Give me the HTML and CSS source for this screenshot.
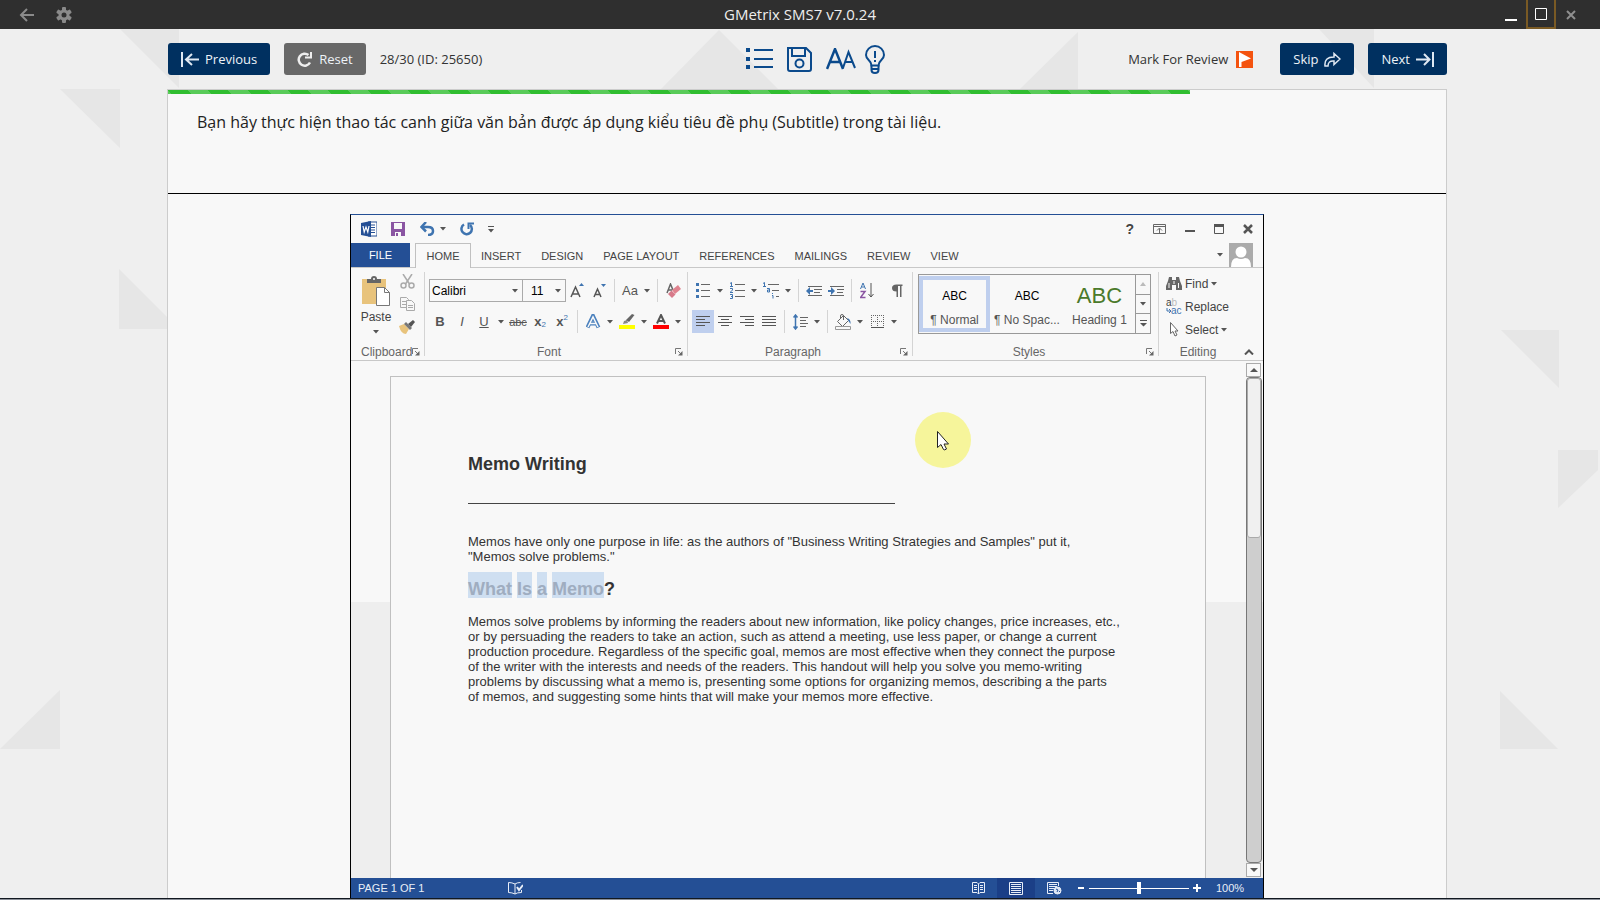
FILE: index.html
```html
<!DOCTYPE html>
<html lang="vi">
<head>
<meta charset="utf-8">
<title>GMetrix SMS7 v7.0.24</title>
<link rel="stylesheet" href="styles.css">
</head>
<body>
<svg width="0" height="0" class="sprite" aria-hidden="true">
  <symbol id="caret" viewBox="0 0 6 4"><path d="M0 0h6L3 3.500z" fill="#555"/></symbol>
  <symbol id="launch" viewBox="0 0 8 8"><path d="M.5 6V.5H6M3 3l3 3" fill="none" stroke="#777"/><path d="M7.500 3v4.500H3z" fill="#666"/></symbol>
</svg>

<svg class="backdrop" viewBox="0 0 1600 900" preserveAspectRatio="xMidYMin slice" aria-hidden="true">
  <g fill="#e6e6e6">
    <path d="M120 29h59v59z"/><path d="M60 89h60v59z"/><path d="M119 269l49 49v11h-49z"/><path d="M0 749l60-59v59z"/>
    <path d="M661 89l58-59 59 59z"/><path d="M1020 89l58-57v57z"/><path d="M1319 29h55v59z"/>
    <path d="M1501 330h58v58z"/><path d="M1558 450h40v20l-40 38z"/><path d="M1500 691l58 58h-58z"/>
  </g>
</svg>

<div class="app">
<header class="titlebar">
  <div class="title-left">
    <button class="tb" aria-label="Back"><svg width="16" height="14" fill="none" stroke="#8a8a8a" stroke-width="2"><path d="M15 7H2M8 1L2 7l6 6"/></svg></button>
    <button class="tb" aria-label="Settings"><svg width="16" height="16" viewBox="-8 -8 16 16"><g fill="#8a8a8a"><circle r="5.500"/><rect x="-2" y="-8" width="4" height="16" rx="1"/><rect x="-2" y="-8" width="4" height="16" rx="1" transform="rotate(60)"/><rect x="-2" y="-8" width="4" height="16" rx="1" transform="rotate(120)"/></g><circle r="2.500" fill="#2f2f2f"/></svg></button>
  </div>
  <h1 class="app-title">GMetrix SMS7 v7.0.24</h1>
  <div class="title-right">
    <button class="tb" aria-label="Minimize"><svg width="12" height="12"><path d="M0 10h12v2H0z" fill="#fff"/></svg></button>
    <button class="tb tb-max" aria-label="Maximize"><svg width="12" height="12"><path d="M.5.5h11v11H.5z" fill="none" stroke="#fff"/></svg></button>
    <button class="tb" aria-label="Close"><svg width="10" height="10"><path d="M1 1l8 8M9 1L1 9" stroke="#8f8f8f" stroke-width="2"/></svg></button>
  </div>
</header>

<nav class="toolbar">
  <div class="tool-left">
    <button class="btn btn-navy"><svg width="18" height="15" fill="none" stroke="#dfe8f2" stroke-width="2"><path d="M1 0v15M18 7.500H5M11 2L5 7.500l6 5.500"/></svg>Previous</button>
    <button class="btn btn-gray"><svg width="16" height="15" fill="none" stroke="#eee" stroke-width="2.500"><path d="M13 10.500A6 6 0 1 1 11.500 3"/><path d="M14 0v5.500H8" stroke-width="2"/></svg>Reset</button>
    <span class="counter">28/30 (ID: 25650)</span>
  </div>
  <div class="tool-mid">
    <button class="icon-btn" aria-label="Question list"><svg width="27" height="24"><g fill="#0b4a8c"><path d="M0 1h4v4H0zM0 10h4v4H0zM0 18h4v4H0z"/><path d="M8 2h19v2H8zM8 11h19v2H8zM8 19h19v2H8z"/></g></svg></button>
    <button class="icon-btn" aria-label="Save"><svg width="25" height="25" fill="none" stroke="#0b4a8c" stroke-width="2"><path d="M1 1h18l5 5v16q0 2-2 2H3q-2 0-2-2z"/><path d="M5 1v8h13V1"/><circle cx="12.500" cy="16.500" r="4"/></svg></button>
    <button class="icon-btn" aria-label="Font size"><svg width="30" height="22" fill="none" stroke="#0b4a8c" stroke-width="2"><path d="M1 21L9 1l8 20M4 14h10" stroke-width="2.500"/><path d="M17 20l5.500-16L29 20M19 14h7.500"/></svg></button>
    <button class="icon-btn" aria-label="Hint"><svg width="20" height="29" fill="none" stroke="#0b4a8c" stroke-width="2"><path d="M6.500 20.500C6.500 15 1 15 1 10a9 9 0 0 1 18 0c0 5-5.500 5-5.500 10.500z"/><path d="M6.500 20v5q0 3 3.500 3t3.500-3v-5M6.500 24h7"/><path d="M10 6v7M10 15v2"/></svg></button>
  </div>
  <div class="tool-right">
    <button class="mark">Mark For Review<svg width="17" height="17"><path d="M0 0h17v17H0z" fill="#f4530f"/><path d="M3 1l12 6.500L5.500 11v5H3z" fill="#fff"/></svg></button>
    <button class="btn btn-navy">Skip<svg width="17" height="15" fill="none" stroke="#dfe8f2" stroke-width="2"><path d="M1 14q-1-9 9-9V1.500l6 5.500-6 5.500V9Q4 8.500 4 14z" stroke-width="1.500"/></svg></button>
    <button class="btn btn-navy">Next<svg width="18" height="15" fill="none" stroke="#dfe8f2" stroke-width="2"><path d="M17 0v15M0 7.500h13M8 2l5.500 5.500L8 13"/></svg></button>
  </div>
</nav>

<main class="panel">
  <div class="progress" role="progressbar" aria-label="Progress"><div class="progress-fill" style="width:80%"></div></div>
  <p class="question">Bạn hãy thực hiện thao tác canh giữa văn bản được áp dụng kiểu tiêu đề phụ (Subtitle) trong tài liệu.</p>

  <section class="word">
    <div class="w-title">
      <div class="qat">
        <svg width="16" height="16"><path d="M7 1h9v14H7z" fill="#fff" stroke="#244f95"/><path d="M10 4h4M10 6.500h4M10 9h4M10 11.500h4" stroke="#244f95"/><path d="M0 2l10-2v16L0 14z" fill="#244f95"/><path d="M2 5l1.200 6L5 6l1.800 5L8 5" fill="none" stroke="#fff" stroke-width="1.200"/></svg>
        <svg class="q-save" width="14" height="14"><path d="M0 0h14v14H0z" fill="#8a55a2"/><path d="M3 1h8v6H3zM4 10h6v4H4z" fill="#f8f8f8"/><path d="M5 11h2v3H5z" fill="#8a55a2"/></svg>
        <svg class="q-undo" width="15" height="14" fill="none" stroke="#3f74b0"><path d="M2 5h6q5 0 5 4t-5 4" stroke-width="2.500"/><path d="M6 0L1.500 5 6 9.500" stroke-width="2.500"/></svg>
        <svg class="q-caret" width="6" height="4"><use href="#caret"/></svg>
        <svg class="q-redo" width="14" height="14" fill="none" stroke="#3f74b0" stroke-width="2.500"><path d="M4 2.500A5.200 5.200 0 1 0 10 3"/><path d="M8.500 7V1.500H14" stroke-width="2"/></svg>
        <svg class="q-more" width="6" height="7"><path d="M0 0h6v1H0zM0 3h6L3 6.500z" fill="#555"/></svg>
      </div>
      <div class="w-ctl">
        <b>?</b>
        <svg width="13" height="10" fill="none" stroke="#666"><path d="M.5.5h12v9H.5zM.5 2.500h12M6.500 9V4.500M4 6.500l2.500-2.500L9 6.500"/></svg>
        <svg width="10" height="10"><path d="M0 6h10v2H0z" fill="#555"/></svg>
        <svg width="10" height="10"><path d="M.5.5h9v9H.5z" fill="none" stroke="#555"/><path d="M0 0h10v3H0z" fill="#555"/></svg>
        <svg width="10" height="10"><path d="M1 1l8 8M9 1L1 9" stroke="#555" stroke-width="2.500"/></svg>
      </div>
    </div>

    <div class="tabs">
      <button class="tab-file">FILE</button>
      <button class="tab-home">HOME</button>
      <button class="tab">INSERT</button>
      <button class="tab">DESIGN</button>
      <button class="tab">PAGE LAYOUT</button>
      <button class="tab">REFERENCES</button>
      <button class="tab">MAILINGS</button>
      <button class="tab">REVIEW</button>
      <button class="tab">VIEW</button>
      <div class="account"><svg width="6" height="4"><use href="#caret"/></svg>
        <svg width="24" height="24"><path d="M0 0h24v24H0z" fill="#ababab"/><circle cx="12" cy="9" r="5.500" fill="#fff"/><path d="M2 24q0-9 6-9 4 2 8 0 6 0 6 9z" fill="#fff"/></svg></div>
    </div>

    <div class="ribbon">
      <div class="group g-clip">
        <div class="clip">
          <button class="paste">
            <svg width="28" height="30"><path d="M0 3h24v25H0z" fill="#e8c37c"/><path d="M5 7V3h4q0-3 3-3t3 3h4v4z" fill="#666"/><circle cx="12" cy="3" r="1" fill="#fff"/><path d="M14.500 11.500h8l5 5v13h-13z" fill="#fff" stroke="#777"/><path d="M22.500 11.500v5h5" fill="none" stroke="#777"/></svg>
            <span>Paste</span><svg width="6" height="4"><use href="#caret"/></svg>
          </button>
          <div class="clip-side">
            <button class="sm" aria-label="Cut"><svg width="15" height="15" fill="none" stroke="#aaa" stroke-width="1.500"><path d="M3 0l6.500 10M12 0L5.500 10"/><circle cx="3.500" cy="11.500" r="2.500"/><circle cx="11.500" cy="11.500" r="2.500"/></svg></button>
            <button class="sm" aria-label="Copy"><svg width="15" height="14" fill="#f8f8f8" stroke="#aaa"><path d="M.5.5h6l2 2v8h-8zM2 4.500h4M2 7.500h4"/><path d="M6.500 3.500h5l3 3v7h-8zM8 8.500h5M8 10.500h5"/></svg></button>
            <button class="sm" aria-label="Format painter"><svg width="16" height="14"><path d="M0 6l5-2 5 5-3 5q-5 0-7-8z" fill="#e8c37c"/><path d="M5 4l2-2 6 6-2 2z" fill="#777"/><path d="M9 4l5-4 2 2-4 5z" fill="#555"/></svg></button>
          </div>
        </div>
        <div class="g-label"><span>Clipboard</span><svg width="8" height="8"><use href="#launch"/></svg></div>
      </div>
      <i class="gsep"></i>

      <div class="group g-font">
        <div class="row">
          <label class="combo combo-font"><select aria-label="Font"><option>Calibri</option></select><svg width="6" height="4"><use href="#caret"/></svg></label>
          <label class="combo combo-size"><select aria-label="Font size"><option>11</option></select><svg width="6" height="4"><use href="#caret"/></svg></label>
          <button class="ib" aria-label="Grow font"><svg width="14" height="16"><path d="M1 14L5.500 4 10 14M2.500 11h6" fill="none" stroke="#555" stroke-width="1.500"/><path d="M9 3h5l-2.500-3z" fill="#3f74b0"/></svg></button>
          <button class="ib" aria-label="Shrink font"><svg width="14" height="16"><path d="M2 14l3.500-8L9 14M3 11.500h5" fill="none" stroke="#555" stroke-width="1.500"/><path d="M9 1h5l-2.500 3z" fill="#3f74b0"/></svg></button>
          <i class="sep"></i>
          <button class="ib txt">Aa</button><button class="cr" aria-label="Case options"><svg width="6" height="4"><use href="#caret"/></svg></button>
          <i class="sep"></i>
          <button class="ib" aria-label="Clear formatting"><svg width="15" height="15"><path d="M1 10L4.500 1 7 7M2 7h4" fill="none" stroke="#666" stroke-width="1.500"/><path d="M2 11l3.500-3.500 4 4L6 15z" fill="#d77a8a"/><path d="M6 7l6-5 3 4-6 5z" fill="#e0838f"/></svg></button>
        </div>
        <div class="row">
          <button class="ib txt"><b>B</b></button>
          <button class="ib txt"><em>I</em></button>
          <button class="ib txt"><u>U</u></button><button class="cr" aria-label="Underline options"><svg width="6" height="4"><use href="#caret"/></svg></button>
          <button class="ib txt small"><s>abc</s></button>
          <button class="ib txt"><b>x</b><sub>2</sub></button>
          <button class="ib txt"><b>x</b><sup>2</sup></button>
          <i class="sep"></i>
          <button class="ib" aria-label="Text effects"><svg width="15" height="15" fill="none"><path d="M1.500 13.500L7 2l5.500 11.500M4 9.500h6" stroke="#4a80bd" stroke-width="4"/><path d="M2 13L7 3l5 10M4 9.500h6" stroke="#f8f8f8" stroke-width="1.500"/></svg></button><button class="cr" aria-label="Effect options"><svg width="6" height="4"><use href="#caret"/></svg></button>
          <button class="ib" aria-label="Highlight"><svg width="16" height="15"><path d="M4 10l1-3 3-1 1 3z" fill="#888"/><path d="M7 6l6-6 2.500 1L10 8z" fill="#666"/><path d="M0 11h16v4H0z" fill="#ff0"/></svg></button><button class="cr" aria-label="Highlight options"><svg width="6" height="4"><use href="#caret"/></svg></button>
          <button class="ib" aria-label="Font color"><svg width="16" height="15"><path d="M4 9.500L8 1l4 8.500M5.500 7h5" fill="none" stroke="#555" stroke-width="2"/><path d="M0 11h16v4H0z" fill="red"/></svg></button><button class="cr" aria-label="Color options"><svg width="6" height="4"><use href="#caret"/></svg></button>
        </div>
        <div class="g-label"><span>Font</span><svg width="8" height="8"><use href="#launch"/></svg></div>
      </div>
      <i class="gsep"></i>

      <div class="group g-para">
        <div class="row">
          <button class="ib" aria-label="Bullets"><svg width="15" height="16"><path d="M0 0h3v3H0zM0 6h3v3H0zM0 12h3v3H0z" fill="#3f74b0"/><path d="M5 1.500h9M5 7.500h9M5 13.500h9" stroke="#666"/></svg></button><button class="cr" aria-label="Bullet options"><svg width="6" height="4"><use href="#caret"/></svg></button>
          <button class="ib" aria-label="Numbering"><svg width="15" height="17"><path d="M0 1.500L1.500.500V4.500M0 4.500h3M0 6.500h2.500v1.500L0 10.500h3M0 12.500h2.500v4H0M1 14.500h1.500" fill="none" stroke="#3f74b0"/><path d="M5 2.500h10M5 8.500h10M5 14.500h10" stroke="#666"/></svg></button><button class="cr" aria-label="Number options"><svg width="6" height="4"><use href="#caret"/></svg></button>
          <button class="ib" aria-label="Multilevel list"><svg width="17" height="17"><path d="M0 1.500L1.500.500V4M0 4.500h3M4 6.500h2.500v3.500H4.500v-2H7M9.500 11v1M9 13.500h1v3" fill="none" stroke="#3f74b0"/><path d="M5 2.500h11M9 8.500h7M13 14.500h3" stroke="#666"/></svg></button><button class="cr" aria-label="Multilevel options"><svg width="6" height="4"><use href="#caret"/></svg></button>
          <i class="sep"></i>
          <button class="ib" aria-label="Decrease indent"><svg width="16" height="12"><path d="M2 1.500h14M8 4.500h8M8 7.500h6M2 10.500h14" stroke="#666"/><path d="M0 6l4-4v3h3v2H4v3z" fill="#3f74b0"/></svg></button>
          <button class="ib" aria-label="Increase indent"><svg width="16" height="12"><path d="M2 1.500h14M9 4.500h7M9 7.500h6M2 10.500h14" stroke="#666"/><path d="M7 6L3 2v3H0v2h3v3z" fill="#3f74b0"/></svg></button>
          <i class="sep"></i>
          <button class="ib" aria-label="Sort"><svg width="14" height="17" fill="none"><path d="M.5 7L3 1l2.500 6M1.500 5h3" stroke="#3f74b0"/><path d="M.5 9.500H5L.5 15.500H5.500" stroke="#8a55a2" stroke-width="1.500"/><path d="M11 1v14M8.500 12l2.500 3 2.500-3" stroke="#555"/></svg></button>
          <button class="ib pil" aria-label="Show marks"><svg width="11" height="13"><path d="M10.500.500H4.500Q0 .500 0 4t4.500 3.500V13H6V2h2v11h1.500V2h1z" fill="#666"/></svg></button>
        </div>
        <div class="row">
          <button class="ib on" aria-label="Align left"><svg width="14" height="12"><path d="M0 .5h14M0 3.500h9M0 6.500h14M0 9.500h9" stroke="#555"/></svg></button>
          <button class="ib" aria-label="Center"><svg width="14" height="12"><path d="M0 .5h14M3 3.500h8M0 6.500h14M3 9.500h8" stroke="#555"/></svg></button>
          <button class="ib" aria-label="Align right"><svg width="14" height="12"><path d="M0 .5h14M5 3.500h9M0 6.500h14M5 9.500h9" stroke="#555"/></svg></button>
          <button class="ib" aria-label="Justify"><svg width="14" height="12"><path d="M0 .5h14M0 3.500h14M0 6.500h14M0 9.500h14" stroke="#555"/></svg></button>
          <i class="sep"></i>
          <button class="ib" aria-label="Line spacing"><svg width="15" height="16"><path d="M2.500 1v14M.500 3.500L2.500 1l2 2.500M.500 12.500l2 2.500 2-2.500" fill="none" stroke="#3f74b0" stroke-width="1.500"/><path d="M7 3.500h8M7 6.500h6M7 9.500h8M7 12.500h6" stroke="#666"/></svg></button><button class="cr" aria-label="Spacing options"><svg width="6" height="4"><use href="#caret"/></svg></button>
          <i class="sep"></i>
          <button class="ib" aria-label="Shading"><svg width="16" height="16" fill="none" stroke="#666"><path d="M2.500 7.500l6-6 5 5-6 6zM5.500 5V2q0-1.500 1.500-1.500T8.500 2v4"/><path d="M12 4q4 1 3.500 6l-2-3z" fill="#3f74b0" stroke="none"/><path d="M.5 12.500h15v3H.5z" stroke="#999"/></svg></button><button class="cr" aria-label="Shading options"><svg width="6" height="4"><use href="#caret"/></svg></button>
          <button class="ib" aria-label="Borders"><svg width="13" height="13"><path d="M.5 0v12M6.500 0v12M12.500 0v12M0 .5h13M0 6.500h13" stroke="#666" stroke-dasharray="1 1"/><path d="M0 12.500h13" stroke="#555"/></svg></button><button class="cr" aria-label="Border options"><svg width="6" height="4"><use href="#caret"/></svg></button>
        </div>
        <div class="g-label"><span>Paragraph</span><svg width="8" height="8"><use href="#launch"/></svg></div>
      </div>
      <i class="gsep"></i>

      <div class="group g-styles">
        <div class="gallery">
          <button class="style style-on"><span class="abc">ABC</span><span>¶ Normal</span></button>
          <button class="style"><span class="abc">ABC</span><span>¶ No Spac...</span></button>
          <button class="style"><span class="abc abc-h">ABC</span><span>Heading 1</span></button>
          <div class="g-scroll">
            <button aria-label="Scroll up"><svg width="6" height="4"><path d="M0 4h6L3 0z" fill="#bbb"/></svg></button>
            <button aria-label="Scroll down"><svg width="6" height="4"><use href="#caret"/></svg></button>
            <button aria-label="More styles"><svg width="7" height="7"><path d="M0 0h7v1H0zM0 3h7L3.500 6.500z" fill="#555"/></svg></button>
          </div>
        </div>
        <div class="g-label"><span>Styles</span><svg width="8" height="8"><use href="#launch"/></svg></div>
      </div>
      <i class="gsep"></i>

      <div class="group g-edit">
        <div class="edit-list">
          <button class="ed"><svg width="16" height="14"><path d="M2 4l1-4h3v3h4V0h3l1 4 2 5v4h-6V8H6v5H0V9z" fill="#666"/><path d="M3 6v5M12.500 6v5M8 4v3" stroke="#f8f8f8"/></svg>Find <svg width="6" height="4"><use href="#caret"/></svg></button>
          <button class="ed"><span class="repl"><span>a<i>b</i></span><span class="ac"><svg width="5" height="6"><path d="M1 0v3h3M3 1l2 2-2 2" fill="none" stroke="#3f74b0"/></svg>ac</span></span>Replace</button>
          <button class="ed"><svg width="16" height="15"><path d="M4.500.500v11l2.500-2 2 4.500 2-1-2-4h3z" fill="#fff" stroke="#666"/></svg>Select <svg width="6" height="4"><use href="#caret"/></svg></button>
        </div>
        <div class="g-label"><span>Editing</span><svg width="10" height="6"><path d="M1 5.500L5 1.500l4 4" fill="none" stroke="#555" stroke-width="2"/></svg></div>
      </div>
    </div>

    <div class="canvas">
      <article class="sheet">
        <h2 class="doc-h">Memo Writing</h2>
        <hr class="doc-rule">
        <p class="doc-p">Memos have only one purpose in life: as the authors of "Business Writing Strategies and Samples" put it,<br>"Memos solve problems."</p>
        <h3 class="doc-h doc-sub"><mark>What</mark> <mark>Is</mark> <mark>a</mark> <mark>Memo</mark>?</h3>
        <p class="doc-p">Memos solve problems by informing the readers about new information, like policy changes, price increases, etc.,<br>or by persuading the readers to take an action, such as attend a meeting, use less paper, or change a current<br>production procedure. Regardless of the specific goal, memos are most effective when they connect the purpose<br>of the writer with the interests and needs of the readers. This handout will help you solve you memo-writing<br>problems by discussing what a memo is, presenting some options for organizing memos, describing a the parts<br>of memos, and suggesting some hints that will make your memos more effective.</p>
      </article>
      <div class="scroll">
        <button class="s-btn" aria-label="Scroll up"><svg width="8" height="4"><path d="M0 4h8L4 0z" fill="#555"/></svg></button>
        <div class="s-track"><div class="s-thumb"></div></div>
        <button class="s-btn" aria-label="Scroll down"><svg width="8" height="4"><path d="M0 0h8L4 4z" fill="#555"/></svg></button>
      </div>
      <div class="pointer"><svg width="13" height="20"><path d="M.5.5v16l3.500-3 2.500 5q1 1 3-.5l-2.500-5h4.500z" fill="#fff" stroke="#222"/></svg></div>
    </div>

    <footer class="status">
      <span>PAGE 1 OF 1</span>
      <svg class="proof" width="15" height="13" fill="none" stroke="#e8eef8"><path d="M7 2Q4 .5.500.500v10Q4 10.500 7 12q2-1.500 6.500-1.500V8M7 2v10M7 2Q9 .5 12.500.500"/><path d="M9 5l2 3 4-5" stroke-width="2"/></svg>
      <div class="views">
        <button class="view" aria-label="Read mode"><svg width="13" height="13" fill="none" stroke="#e8eef8"><path d="M6.500 2L5 .5H.500v10H5L6.500 12 8 10.500h4.500V.5H8zM6.500 2v10M2 3.500h3M2 5.500h3M2 7.500h3M8 3.500h3M8 5.500h3M8 7.500h3"/></svg></button>
        <button class="view view-on" aria-label="Print layout"><svg width="14" height="13" fill="none" stroke="#e8eef8"><path d="M.5.5h13v12H.5zM2 2.500h10M2 4.500h10M2 6.500h10M2 8.500h10M2 10.500h10"/></svg></button>
        <button class="view" aria-label="Web layout"><svg width="15" height="13" fill="none" stroke="#e8eef8"><path d="M11.500 4V.5H.500v11H6M2 2.500h8M2 4.500h8M2 6.500h5M2 8.500h4"/><circle cx="10.500" cy="8.500" r="3.500" fill="#dbe5f5"/><path d="M9 7l2 1-1 2M12 9l1 1" stroke="#244f95"/></svg></button>
      </div>
      <div class="zoom">
        <button class="z-btn" aria-label="Zoom out"><svg width="8" height="8"><path d="M1 3h6v2H1z" fill="#fff"/></svg></button>
        <input type="range" min="0" max="100" value="50" aria-label="Zoom">
        <button class="z-btn" aria-label="Zoom in"><svg width="8" height="8"><path d="M0 3h8v2H0zM3 0h2v8H3z" fill="#fff"/></svg></button>
        <span class="pct">100%</span>
      </div>
    </footer>
  </section>
</main>
<div class="edge"></div>
</div>
</body>
</html>
```

FILE: styles.css
```css
* { box-sizing: border-box; }
body { margin: 0; background: #efefef; font-family: "Open Sans", "Noto Sans", sans-serif; color: #333; }
button { border: 0; padding: 0; margin: 0; background: none; font: inherit; color: inherit; cursor: pointer; }
svg { display: block; flex: none; }
.sprite { position: absolute; }
.backdrop { position: absolute; left: 0; top: 0; width: 100%; height: 100%; }
.app { position: relative; min-height: 100vh; display: flex; flex-direction: column; }

.titlebar { display: grid; grid-template-columns: 1fr auto 1fr; height: 29px; background: #2f2f2f; color: #eee; }
.title-left, .title-right { display: flex; align-items: stretch; }
.title-left { gap: 7px; padding-left: 12px; }
.title-right { justify-content: flex-end; padding-right: 14px; }
.tb { width: 30px; display: flex; align-items: center; justify-content: center; }
.tb-max { border: 2px solid #7a5a24; border-top: 0; }
.app-title { margin: 0; font-size: 15px; font-weight: 400; line-height: 28px; }

.toolbar { display: grid; grid-template-columns: 1fr auto 1fr; align-items: center; height: 60px; padding: 0 153px 0 168px; font-size: 13px; }
.tool-left, .tool-mid, .tool-right { display: flex; align-items: center; gap: 14px; }
.tool-mid { padding-left: 15px; }
.tool-right { justify-content: flex-end; }
.icon-btn { display: flex; align-items: center; height: 32px; }
.icon-btn:last-child { width: 20px; margin-left: -5px; }
.btn { display: flex; align-items: center; justify-content: center; gap: 6px; height: 32px; padding: 0 13px; border-radius: 3px; color: #eef3f8; }
.btn-navy { background: #003060; }
.btn-gray { background: #686868; }
.mark { display: flex; align-items: center; gap: 8px; margin-right: 13px; white-space: nowrap; }

.panel { flex: 1; display: flex; flex-direction: column; margin: 0 153px 0 167px; background: #f8f8f8; border: 1px solid #ccc; border-bottom: 0; }
.progress { height: 4px; }
.progress-fill { height: 4px; background: #30be30 linear-gradient(45deg, rgba(255,255,255,.2) 25%, transparent 25%, transparent 50%, rgba(255,255,255,.2) 50%, rgba(255,255,255,.2) 75%, transparent 75%) 20px 0 / 40px 40px; }
.question { margin: 0; height: 100px; padding: 16px 29px; border-bottom: 1px solid #000; color: #222; font-size: 16px; line-height: 24px; }

.word { flex: 1; display: flex; flex-direction: column; width: 100%; max-width: 914px; margin: 20px auto 0; border: 1px solid #000; border-top-color: #244f95; border-bottom: 0; font-family: "Liberation Sans", Arial, sans-serif; font-size: 12px; color: #444; }
.w-title { display: flex; justify-content: space-between; height: 28px; padding: 0 10px; }
.qat, .w-ctl { display: flex; align-items: center; }
.q-save { margin-left: 14px; }
.q-undo { margin-left: 15px; }
.q-caret { margin-left: 5px; }
.q-redo { margin-left: 14px; }
.q-more { margin-left: 14px; }
.w-ctl { gap: 19px; }
.w-ctl b { font-size: 14px; }

.tabs { display: flex; height: 25px; border-bottom: 1px solid #c8c8c8; font-size: 11px; }
.tab-file { width: 59px; background: #244f95; color: #fff; }
.tab-home { width: 56px; height: 25px; margin-left: 5px; border: 1px solid #c0c0c0; border-bottom: 0; background: #f8f8f8; }
.tab { padding: 1px 10px 0; }
.account { display: flex; align-items: center; gap: 6px; margin-left: auto; padding-right: 10px; }

.ribbon { display: flex; height: 93px; border-bottom: 1px solid #c8c8c8; }
.gsep { width: 1px; margin: 4px 0; background: #d4d4d4; }
.group { display: flex; flex-direction: column; padding-top: 11px; }
.row { display: flex; height: 23px; margin-bottom: 8px; }
.row > * { flex: none; }
.g-label { display: flex; align-items: center; height: 14px; margin: auto 4px 1px 0; color: #666; }
.g-label span { flex: 1; padding-right: 6px; text-align: center; }
.g-clip { width: 73px; padding-top: 5px; }
.g-clip .g-label { padding-left: 10px; }
.g-clip .g-label span { padding-right: 0; }
.g-font { width: 262px; padding-left: 4px; }
.g-para { width: 224px; padding-left: 4px; }
.g-styles { flex: 1; padding: 6px 0 0 5px; }
.g-edit { width: 104px; padding: 4px 5px 0 7px; }
.g-edit .g-label span { padding-right: 14px; }
.ib { width: 22px; display: flex; align-items: center; justify-content: center; }
.cr { width: 12px; display: flex; align-items: center; justify-content: center; }
.on { background: #bfcfee; }
.pil { margin-left: 8px; }
.sep { width: 1px; margin: 0 4px; background: #d4d4d4; }
.txt { font-size: 13px; color: #555; }
.small { font-size: 11px; }
.txt sub, .txt sup { font-size: 8px; color: #3f74b0; line-height: 8px; }
.txt sub { align-self: flex-end; margin-bottom: 4px; }
.txt sup { align-self: flex-start; margin-top: 4px; }
.combo { position: relative; height: 23px; border: 1px solid #aaa; }
.combo select { display: block; width: 100%; height: 21px; padding: 0 2px; border: 0; background: none; appearance: none; font: 12px "Liberation Sans", Arial, sans-serif; color: #000; }
.combo svg { position: absolute; right: 4px; top: 9px; }
.combo-font { width: 94px; }
.combo-size { width: 43px; border-left: 0; }
.combo-size select { padding-left: 8px; }
.clip { display: flex; gap: 7px; padding-left: 10px; }
.paste { display: flex; flex-direction: column; align-items: center; width: 30px; padding-top: 3px; }
.paste span { line-height: 14px; margin: 4px 0 6px; }
.clip-side { display: flex; flex-direction: column; padding-top: 1px; }
.sm { width: 18px; height: 23px; display: flex; align-items: flex-start; justify-content: center; }

.gallery { display: flex; width: 233px; height: 60px; border: 1px solid #999; }
.style { flex: 1; margin: 1px 0; border: 4px solid transparent; display: flex; flex-direction: column; align-items: center; white-space: nowrap; color: #555; line-height: 14px; }
.style-on { border-color: #bfcfee; }
.abc { height: 28px; line-height: 32px; color: #000; }
.abc-h { font-size: 22px; color: #4b7a2b; }
.style > span + span { display: block; margin-top: 5px; }
.g-scroll { width: 15px; display: flex; flex-direction: column; border-left: 1px solid #999; }
.g-scroll button { flex: 1; display: flex; align-items: center; justify-content: center; }
.g-scroll button + button { border-top: 1px solid #999; }
.edit-list { display: flex; flex-direction: column; }
.ed { display: flex; align-items: center; gap: 3px; height: 23px; }
.repl { width: 16px; font-size: 10px; line-height: 8px; text-align: left; white-space: nowrap; }
.repl > span { display: flex; align-items: center; }
.repl i { color: #bbb; font-style: normal; }
.repl .ac { color: #3f74b0; }

.canvas { position: relative; flex: 1; display: flex; background: linear-gradient(#f8f8f8 241px, #eee 241px); }
.sheet { flex: 1; margin: 15px 40px 0 39px; padding: 75px 77px 40px; background: #f8f8f8; border: 1px solid #c0c0c0; border-bottom: 0; }
.doc-h { margin: 0; font-size: 18px; line-height: 24px; color: #333; }
.doc-rule { width: 427px; margin: 27px 0 30px; border: 0; border-top: 1px solid #444; }
.doc-p { margin: 0; font-size: 13px; line-height: 15px; white-space: nowrap; color: #333; }
.doc-sub { line-height: 18px; margin: 8px 0 16px; }
.doc-sub mark { display: inline-block; padding-top: 8px; background: #cfdff1; color: #9fadc0; }
.scroll { width: 17px; display: flex; flex-direction: column; padding: 2px 1px 1px 0; }
.s-btn { width: 15px; height: 14px; border: 1px solid #aaa; background: #f8f8f8; display: flex; align-items: center; justify-content: center; }
.s-track { flex: 1; width: 16px; border: 1px solid #777; border-radius: 4px; background: #cecece; }
.s-thumb { height: 33%; border: 1px solid #aaa; border-radius: 3px; background: #f0f0f0; }
.pointer { position: absolute; left: 564px; top: 51px; width: 56px; height: 56px; padding: 19px 0 0 22px; border-radius: 50%; background: #f6f59b; }

.status { display: flex; align-items: center; height: 20px; padding: 0 19px 0 7px; background: #244f95; color: #e8eef8; font-size: 11px; }
.proof { margin-left: 84px; }
.views { display: flex; align-self: stretch; margin-left: auto; }
.view { width: 38px; display: flex; align-items: center; justify-content: center; }
.view-on { background: #1b3f87; }
.zoom { display: flex; align-items: center; gap: 4px; margin-left: 4px; }
.z-btn { display: block; }
.zoom input { appearance: none; width: 100px; height: 12px; margin: 0; background: linear-gradient(#fff, #fff) center / 100% 1px no-repeat; }
.zoom input::-webkit-slider-thumb { appearance: none; width: 4px; height: 12px; background: #fff; }
.pct { width: 28px; margin-left: 11px; }
.edge { height: 2px; background: #8a8f98; border-top: 1px solid #111820; }
```
